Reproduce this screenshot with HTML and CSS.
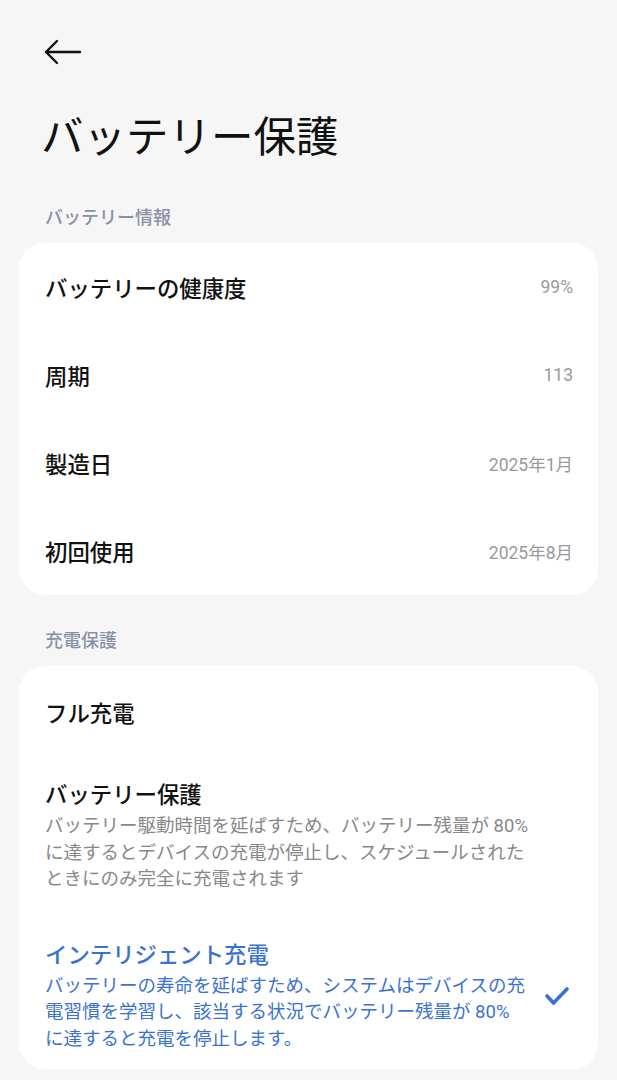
FILE: index.html
```html
<!DOCTYPE html>
<html lang="ja">
<head>
    <meta charset="UTF-8">
    <meta name="viewport" content="width=device-width, initial-scale=1.0">
    <title>バッテリー保護</title>
    <link rel="stylesheet" href="styles.css">
</head>
<body>
    <div class="page">
        <div class="topbar">
            <svg class="back" width="38" height="26" viewBox="0 0 38 26">
                <path d="M2 13H36M13 2L2 13L13 24" fill="none" stroke="#111" stroke-width="2.4" stroke-linecap="round" stroke-linejoin="round"/>
            </svg>
        </div>
        <h1 class="title">バッテリー保護</h1>

        <div class="section-label">バッテリー情報</div>
        <div class="card info">
            <div class="row">
                <span class="row-label">バッテリーの健康度</span>
                <span class="row-value">99%</span>
            </div>
            <div class="row">
                <span class="row-label">周期</span>
                <span class="row-value">113</span>
            </div>
            <div class="row">
                <span class="row-label">製造日</span>
                <span class="row-value">2025年1月</span>
            </div>
            <div class="row">
                <span class="row-label">初回使用</span>
                <span class="row-value">2025年8月</span>
            </div>
        </div>

        <div class="section-label second">充電保護</div>
        <div class="card options">
            <div class="row">
                <span class="row-label">フル充電</span>
            </div>
            <div class="option first">
                <div class="option-text">
                    <div class="option-title">バッテリー保護</div>
                    <div class="option-desc">バッテリー駆動時間を延ばすため、バッテリー残量が 80% に達するとデバイスの充電が停止し、スケジュールされたときにのみ完全に充電されます</div>
                </div>
            </div>
            <div class="option selected">
                <div class="option-text">
                    <div class="option-title">インテリジェント充電</div>
                    <div class="option-desc">バッテリーの寿命を延ばすため、システムはデバイスの充電習慣を学習し、該当する状況でバッテリー残量が 80% に達すると充電を停止します。</div>
                </div>
                <svg class="check" width="26" height="22" viewBox="0 0 26 22">
                    <path d="M3 11L9.5 18L23 4" fill="none" stroke="#3c70d2" stroke-width="3.6" stroke-linecap="round" stroke-linejoin="round"/>
                </svg>
            </div>
        </div>
    </div>
</body>
</html>
```

FILE: styles.css
```css
body {
    margin: 0;
    background: #f6f6f6;
    font-family: Roboto, "Noto Sans CJK JP", sans-serif;
    color: #111;
}

.page {
    padding: 0 19px 12px 19px;
}

.topbar {
    height: 109px;
    display: flex;
    align-items: flex-start;
    padding-top: 39px;
    padding-left: 25px;
    box-sizing: border-box;
}

.title {
    margin: 0 0 0 22px;
    font-size: 42.5px;
    font-weight: 400;
    line-height: 58px;
}

.section-label {
    margin: 39px 0 0 26px;
    font-size: 18px;
    font-weight: 500;
    color: #8a91a6;
    line-height: 24px;
}

.section-label.second {
    margin-top: 34px;
}

.card {
    margin-top: 13px;
    background: #fff;
    border-radius: 26px;
}

.row {
    height: 88px;
    display: flex;
    align-items: center;
    justify-content: space-between;
    padding: 0 25px 0 26px;
}

.row-label {
    font-size: 22.4px;
    font-weight: 500;
}

.row-value {
    font-size: 17.5px;
    color: #999;
}

.options {
    padding: 2px 0 17px 0;
}

.option {
    display: flex;
    align-items: center;
    padding: 0 28px 0 26px;
}

.option.first {
    margin-top: 24px;
}

.option + .option {
    margin-top: 47px;
}

.option-text {
    width: 485px;
}

.option-title {
    font-size: 22.4px;
    font-weight: 500;
    line-height: 30px;
}

.option-desc {
    margin-top: 3px;
    font-size: 18.5px;
    line-height: 26.5px;
    color: #888;
}

.option.selected .option-title,
.option.selected .option-desc {
    color: #3c72cf;
}

.check {
    margin-left: auto;
}
```
